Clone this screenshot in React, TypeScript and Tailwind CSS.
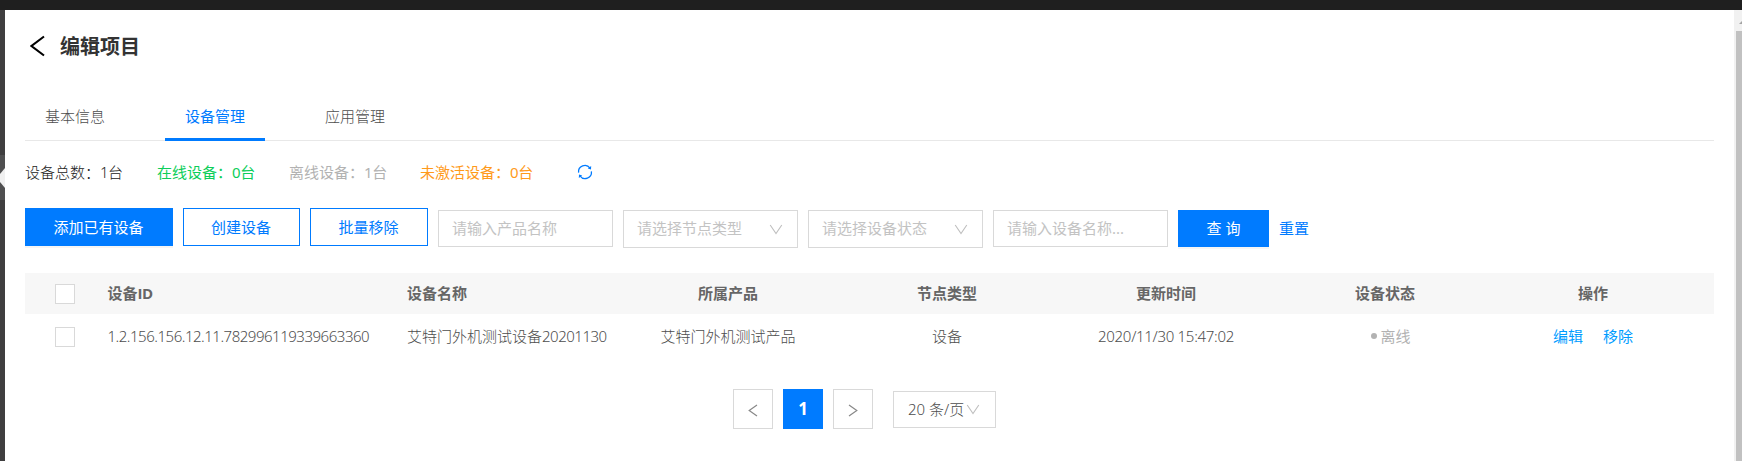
import type { ReactNode } from "react";

const tabs = ["基本信息", "设备管理", "应用管理"];

function Num({ children }: { children: ReactNode }) {
  return <span className="tracking-[-0.48px]">{children}</span>;
}

function Chevron({ className = "" }: { className?: string }) {
  return (
    <svg className={`shrink-0 ${className}`} width="14" height="11" viewBox="0 0 14 11" fill="none" stroke="#bfbfbf" strokeWidth="1.1">
      <path d="M1.2 1 L7 9.6 L12.8 1" />
    </svg>
  );
}

function RefreshIcon() {
  return (
    <svg width="16" height="18" viewBox="0 0 16 18" fill="none" stroke="#007bff" strokeWidth="1.3">
      <path d="M1.6 9.6 A6.3 6.3 0 0 1 13 5.2" />
      <path d="M14.4 8.4 A6.3 6.3 0 0 1 3 12.8" />
      <path d="M14.2 3 L14 6.6 L10.8 5.6 Z" fill="#007bff" stroke="none" />
      <path d="M1.8 15 L2 11.4 L5.2 12.4 Z" fill="#007bff" stroke="none" />
    </svg>
  );
}

function Field({ text, select = false }: { text: string; select?: boolean }) {
  return (
    <div
      className={`flex w-[175px] items-center justify-between border border-[#d9d9d9] pr-[14px] pl-[13px] font-normal text-[#c3c3c3] ${
        select ? "h-[38px]" : "h-[37px]"
      }`}
    >
      <span className="pb-[2px]">{text}</span>
      {select && <Chevron />}
    </div>
  );
}

function Checkbox() {
  return <span className="ml-[30px] block h-5 w-5 border border-[#d9d9d9] bg-white" />;
}

function Row({ head = false, cells }: { head?: boolean; cells: ReactNode[] }) {
  return (
    <div
      className={`grid grid-cols-[82.5px_299.5px_211.5px_219px_219px_219px_219px_197px] items-center ${
        head ? "h-[41px] bg-[#f7f7f7] font-bold text-[#666]" : "h-[45px]"
      }`}
    >
      <Checkbox />
      {cells.map((cell, i) => (
        <div key={i} className={`pb-[2px] ${i < 2 ? "whitespace-nowrap" : "text-center"}`}>
          {cell}
        </div>
      ))}
    </div>
  );
}

export default function App() {
  return (
    <div className="flex h-[461px] w-[1742px] flex-col overflow-hidden bg-white text-[15px] leading-[22px] font-light text-[#4d4d4d] [font-family:'Noto_Sans','Noto_Sans_CJK_SC',sans-serif]">
      <div className="h-[10px] shrink-0 bg-[#1f1f1f]" />
      <div className="flex min-h-0 flex-1">
        <aside className="flex w-[5px] shrink-0 flex-col bg-[#3f3e3f] pt-[145px]">
          <div className="flex h-[45px] items-center bg-[#4f4f50]">
            <svg width="5" height="22" viewBox="0 0 5 22" fill="#f0f0f0">
              <path d="M5 1 L0 7 V15 L5 21 Z" />
            </svg>
          </div>
        </aside>

        <main className="flex flex-1 flex-col pr-5 pl-5">
          <header className="mt-[22px] flex h-7 items-center">
            <svg className="mt-[-1px] ml-[5px]" width="15" height="22" viewBox="0 0 15 22" fill="none" stroke="#000" strokeWidth="2.1">
              <path d="M14 1.5 L1.5 11 L14 20.5" />
            </svg>
            <h1 className="ml-[15px] pt-px text-[20px] leading-7 font-bold text-[#333]">编辑项目</h1>
          </header>

          <nav className="mt-[33px] flex h-12 gap-10 border-b border-[#e8e8e8]">
            {tabs.map((t, i) => (
              <div
                key={t}
                className={`flex h-12 w-[100px] items-center justify-center pb-[2px] ${
                  i === 1 ? "border-b-[3px] border-[#007bff] pt-[3px] font-normal text-[#007bff]" : ""
                }`}
              >
                {t}
              </div>
            ))}
          </nav>

          <section className="mt-[20px] flex h-[22px] items-center font-normal">
            <div className="w-[132px] font-light text-[#222]">设备总数：<Num>1</Num>台</div>
            <div className="w-[132px] text-[#0dce5a]">在线设备：<Num>0</Num>台</div>
            <div className="w-[131px] text-[#b2b2b2]">离线设备：<Num>1</Num>台</div>
            <div className="w-[157px] text-[#ff9a1a]">未激活设备：<Num>0</Num>台</div>
            <RefreshIcon />
          </section>

          <section className="mt-[25px] flex h-10 items-start gap-[10px] font-normal">
            <button className="h-[38px] w-[148px] bg-[#007bff] pr-px text-white shadow-[0_2px_0_rgba(0,0,0,0.04)]">添加已有设备</button>
            <button className="h-[38px] w-[117px] border border-[#007bff] pr-px text-[#007bff]">创建设备</button>
            <button className="h-[38px] w-[118px] border border-[#007bff] pr-px text-[#007bff]">批量移除</button>
            <div className="flex items-start gap-[10px] pt-[2px]">
              <Field text="请输入产品名称" />
              <Field text="请选择节点类型" select />
              <Field text="请选择设备状态" select />
              <Field text="请输入设备名称..." />
              <button className="h-[37px] w-[91px] bg-[#007bff] pb-[2px] text-white shadow-[0_2px_0_rgba(0,0,0,0.04)]">查 询</button>
              <a className="flex h-[37px] items-center pb-[2px] text-[#007bff]">重置</a>
            </div>
          </section>

          <section className="mt-[25px]">
            <Row
              head
              cells={[
                <>设备<span className="tracking-[-0.6px] [font-family:'Open_Sans',sans-serif]">ID</span></>,
                "设备名称",
                "所属产品",
                "节点类型",
                "更新时间",
                "设备状态",
                "操作",
              ]}
            />
            <Row
              cells={[
                <Num>1.2.156.156.12.11.782996119339663360</Num>,
                <>艾特门外机测试设备<Num>20201130</Num></>,
                "艾特门外机测试产品",
                "设备",
                <span className="tracking-[-0.3px]">2020/11/30 15:47:02</span>,
                <div className="flex items-center justify-center gap-[3px] pl-[12px] font-normal text-[#b2b2b2]">
                  <i className="h-[6px] w-[6px] rounded-full bg-[#b2b2b2]" />
                  离线
                </div>,
                <div className="flex justify-center gap-5 font-normal text-[#009cff]">
                  <a>编辑</a>
                  <a>移除</a>
                </div>,
              ]}
            />
          </section>

          <footer className="mt-[30px] ml-[708px] flex h-10 items-center gap-[10px]">
            <button className="flex h-10 w-10 items-center justify-center border border-[#d9d9d9] pt-[2px]">
              <svg width="10" height="14" viewBox="0 0 10 14" fill="none" stroke="#888" strokeWidth="1.2">
                <path d="M9 2 L1.2 7.5 L9 13" />
              </svg>
            </button>
            <button className="h-10 w-10 bg-[#007bff] text-[17px] font-bold text-white">1</button>
            <button className="flex h-10 w-10 items-center justify-center border border-[#d9d9d9] pt-[2px]">
              <svg width="10" height="14" viewBox="0 0 10 14" fill="none" stroke="#888" strokeWidth="1.2">
                <path d="M1 2 L8.8 7.5 L1 13" />
              </svg>
            </button>
            <div className="ml-[10px] flex h-[37px] w-[103px] items-center border border-[#d9d9d9] pl-[14px] whitespace-nowrap">
              <span className="w-[58px]">20 条/页</span>
              <Chevron />
            </div>
          </footer>
        </main>

        <div className="flex w-[8px] shrink-0 flex-col bg-[#f1f1f1] pl-[2px]">
          <svg className="ml-[3px] h-[21px] w-[3px] shrink-0" viewBox="0 0 3 21" fill="#a3a3a3">
            <path d="M0 14 L3 11 V14 Z" />
          </svg>
          <div className="flex-1 bg-[#c1c1c1]" />
        </div>
      </div>
    </div>
  );
}
